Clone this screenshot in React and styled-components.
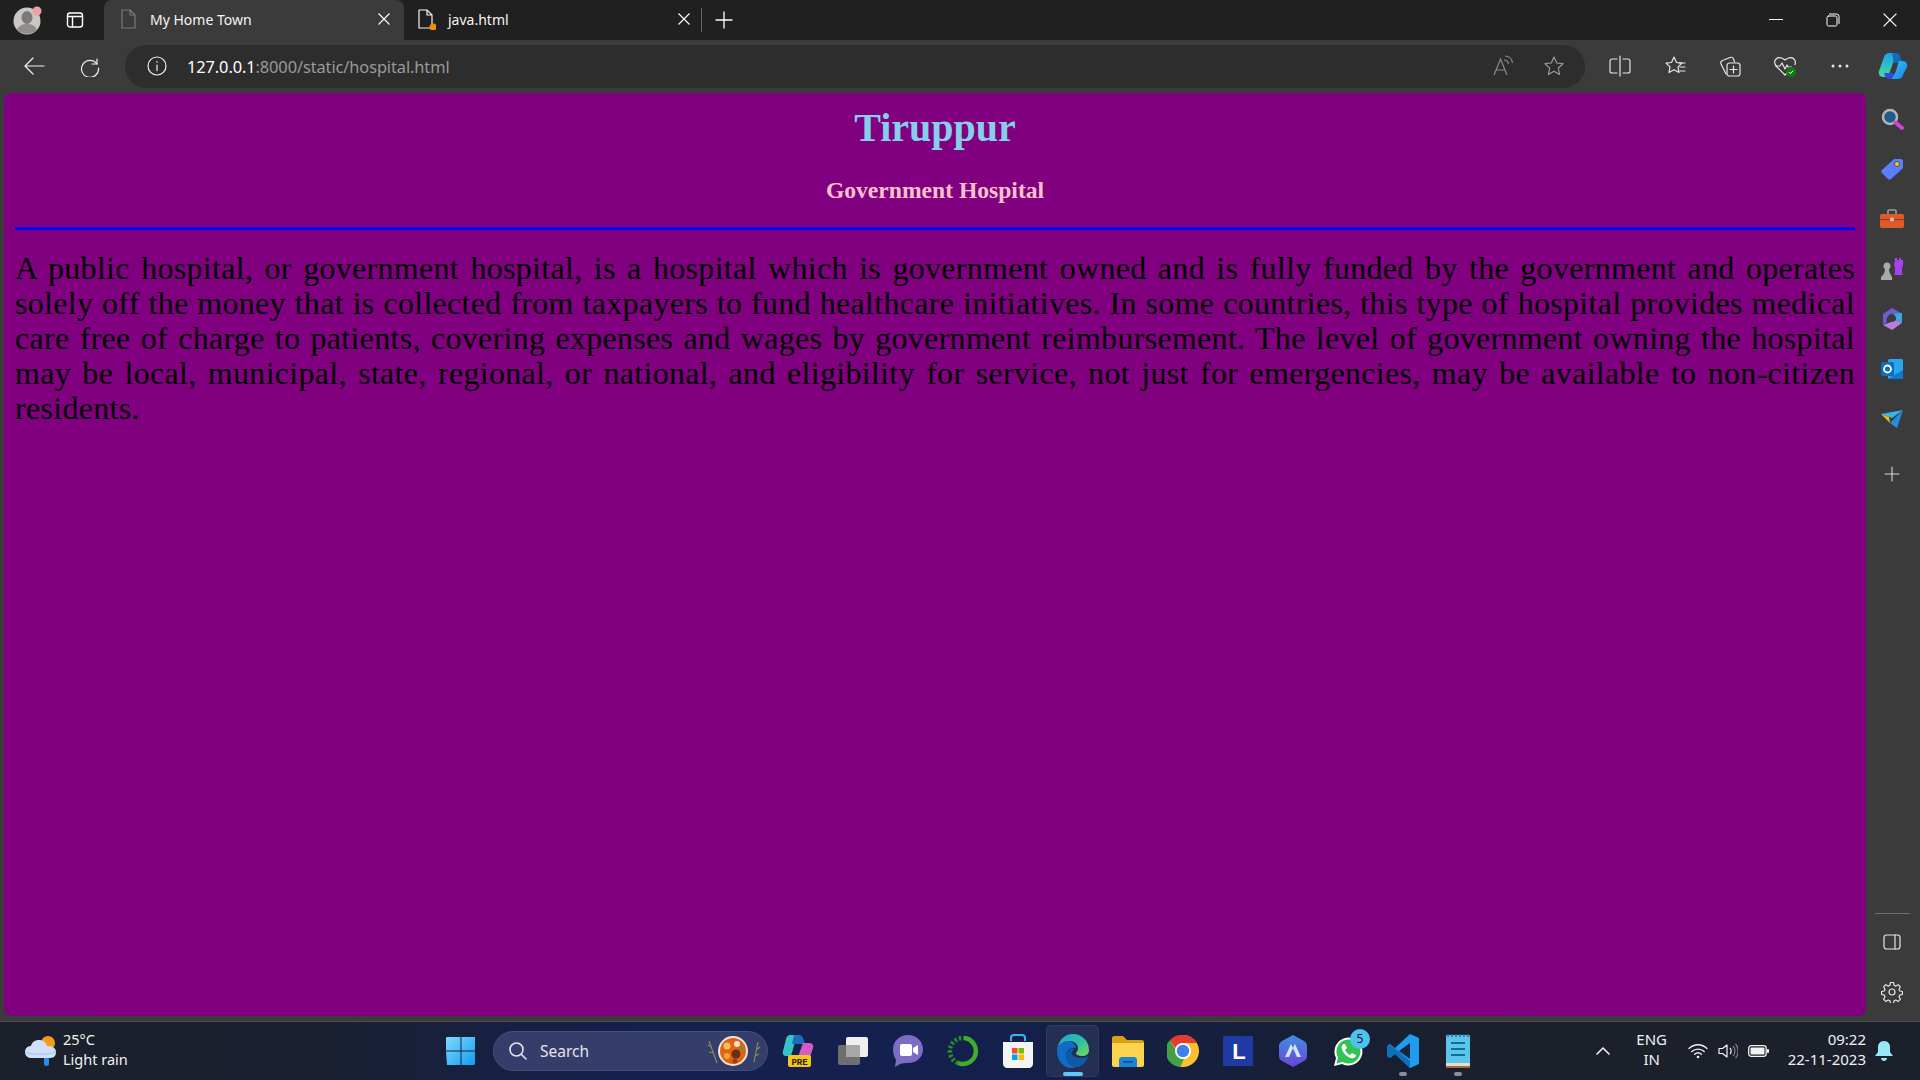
import React from 'react';
import styled, { createGlobalStyle } from 'styled-components';

const GlobalStyle = createGlobalStyle`
  html, body { margin: 0; padding: 0; background: #3b3b3b; }
  body { font-family: "Noto Sans", "Open Sans", sans-serif; overflow: hidden; }
`;

const Screen = styled.div`
  width: 1920px;
  height: 1080px;
  display: flex;
  flex-direction: column;
  overflow: hidden;
`;

/* ---------- tab strip ---------- */
const TabStrip = styled.div`
  height: 40px;
  flex: none;
  display: flex;
  align-items: center;
  background: #202020;
  color: #fff;
`;
const StripButton = styled.div`
  width: ${p => p.$w}px;
  height: 40px;
  flex: none;
  box-sizing: border-box;
  padding-right: ${p => p.$pr || 0}px;
  display: flex;
  align-items: center;
  justify-content: center;
`;
const Tab = styled.div`
  width: ${p => p.$w}px;
  height: 40px;
  flex: none;
  box-sizing: border-box;
  display: flex;
  align-items: center;
  padding: 0 ${p => p.$active ? 14 : 9}px 2px ${p => p.$active ? 15 : 12}px;
  background: ${p => p.$active ? '#3b3b3b' : 'transparent'};
  border-radius: 8px 8px 0 0;
`;
const TabTitle = styled.span`
  flex: 1;
  margin-left: ${p => p.$active ? 11 : 12}px;
  font-size: 14px;
  color: #f4f4f4;
  white-space: nowrap;
`;
const TabDivider = styled.div`
  width: 1px;
  height: 24px;
  margin: 0 2px;
  background: #6a6a6a;
  flex: none;
`;
const WindowControls = styled.div`
  margin-left: auto;
  padding-right: 2px;
  display: flex;
`;
const WindowButton = styled.div`
  width: 57px;
  height: 40px;
  display: flex;
  align-items: center;
  justify-content: center;
`;

/* ---------- toolbar ---------- */
const Toolbar = styled.div`
  height: 48px;
  flex: none;
  display: flex;
  align-items: center;
  background: #3b3b3b;
  padding-top: 4px;
  box-sizing: border-box;
`;
const ToolButton = styled.div`
  width: ${p => p.$w || 55}px;
  height: 40px;
  flex: none;
  display: flex;
  align-items: center;
  justify-content: center;
`;
const AddressBar = styled.div`
  width: 1460px;
  height: 43px;
  margin: 0 7px 0 13px;
  flex: none;
  box-sizing: border-box;
  display: flex;
  align-items: center;
  padding: 0 6px 0 22px;
  background: #2d2d2d;
  border-radius: 22px;
`;
const Url = styled.div`
  margin-left: 20px;
  flex: 1;
  font-size: 16.4px;
  letter-spacing: -0.1px;
  color: #9a9a9a;
`;
const UrlHost = styled.span`
  color: #fff;
`;

/* ---------- page ---------- */
const Middle = styled.div`
  flex: 1;
  display: flex;
  min-height: 0;
  background: #3b3b3b;
`;
const Page = styled.main`
  flex: 1;
  margin: 5px 0 5px 4px;
  padding: 0 11px;
  background: #800080;
  border-radius: 8px;
  font-family: "Liberation Serif", "Times New Roman", serif;
  color: #000;
  overflow: hidden;
`;
const Town = styled.h1`
  margin: 0;
  padding-top: 12px;
  font-size: 40px;
  line-height: 46px;
  text-align: center;
  color: skyblue;
`;
const Subtitle = styled.h2`
  margin: 26px 0 0;
  font-size: 23.6px;
  line-height: 27px;
  text-align: center;
  color: pink;
`;
const Rule = styled.div`
  height: 3px;
  margin-top: 23px;
  background: #0000ff;
`;
const Body = styled.p`
  margin: 21px 0 0;
  font-size: 32px;
  line-height: 35px;
  letter-spacing: 0.3px;
`;
const BodyLine = styled.span`
  display: block;
  white-space: nowrap;
  text-align: justify;
  text-align-last: ${p => p.$last ? 'left' : 'justify'};
`;

/* ---------- edge sidebar ---------- */
const Sidebar = styled.aside`
  width: 54px;
  flex: none;
  box-sizing: border-box;
  display: flex;
  flex-direction: column;
  align-items: center;
  padding: 6px 2px 0 0;
`;
const SideSlot = styled.div`
  width: 100%;
  height: 50px;
  flex: none;
  display: flex;
  align-items: center;
  justify-content: center;
`;
const SideAdd = styled(SideSlot)`
  margin-top: 5px;
`;
const SideFooter = styled.div`
  margin-top: auto;
  width: 100%;
  display: flex;
  flex-direction: column;
  align-items: center;
  padding-bottom: 4px;
`;
const SideLine = styled.div`
  width: 35px;
  height: 1px;
  background: #6f6f6f;
  margin-bottom: 3px;
`;

/* ---------- taskbar ---------- */
const Taskbar = styled.footer`
  height: 59px;
  flex: none;
  box-sizing: border-box;
  border-top: 1px solid #4a4d55;
  display: flex;
  align-items: center;
  color: #fff;
  background: linear-gradient(90deg, #1b202b 0%, #1a2030 16%, #14204f 34%, #14204c 52%, #171f36 68%, #1b202b 80%, #1b202b 100%);
`;
const Weather = styled.div`
  width: 435px;
  flex: none;
  box-sizing: border-box;
  display: flex;
  align-items: center;
  padding-left: 24px;
`;
const WeatherText = styled.div`
  margin: -4px 0 0 5px;
  font-size: 14.5px;
  line-height: 20px;
  color: #f2f2f2;
`;
const StartButton = styled.div`
  width: 52px;
  margin-right: 6px;
  flex: none;
  display: flex;
  justify-content: center;
`;
const SearchBox = styled.div`
  width: 275px;
  height: 40px;
  flex: none;
  box-sizing: border-box;
  display: flex;
  align-items: center;
  padding: 0 5px 0 14px;
  background: #353d6b;
  border: 1px solid #464e79;
  border-radius: 20px;
`;
const SearchLabel = styled.span`
  flex: 1;
  margin-left: 12px;
  font-size: 15.5px;
  color: #e4e4ea;
`;
const Apps = styled.div`
  display: flex;
  margin-left: 2px;
`;
const AppSlot = styled.div`
  width: ${p => p.$active ? 53 : 55}px;
  height: 52px;
  margin: 0 ${p => p.$active ? 1 : 0}px;
  flex: none;
  position: relative;
  display: flex;
  align-items: center;
  justify-content: center;
  box-sizing: border-box;
  background: ${p => p.$active ? 'rgba(255,255,255,.07)' : 'transparent'};
  border: 1px solid ${p => p.$active ? 'rgba(255,255,255,.05)' : 'transparent'};
  border-radius: 5px;
`;
const RunDot = styled.span`
  position: absolute;
  left: 50%;
  bottom: 0;
  transform: translateX(-50%);
  width: ${p => p.$active ? 20 : 8}px;
  height: 4px;
  border-radius: 2px;
  background: ${p => p.$active ? '#5fc8fa' : '#8b8e96'};
`;
const Badge = styled.span`
  position: absolute;
  right: 4px;
  top: 3px;
  width: 20px;
  height: 20px;
  border-radius: 50%;
  background: #4cc2f1;
  color: #10151f;
  font-size: 12px;
  line-height: 20px;
  text-align: center;
`;
const Tray = styled.div`
  margin-left: auto;
  display: flex;
  align-items: center;
  padding-right: 27px;
`;
const Lang = styled.div`
  width: 50px;
  margin: -4px 11px 0 16px;
  font-size: 15px;
  line-height: 20px;
  text-align: center;
  color: #f0f0f0;
`;
const TrayIcons = styled.div`
  display: flex;
  align-items: center;
  gap: 10px;
`;
const Clock = styled.div`
  margin: -4px 0 0 19px;
  font-size: 15px;
  line-height: 20px;
  text-align: right;
  color: #f2f2f2;
`;
const Bell = styled.div`
  margin-left: 9px;
  display: flex;
`;

/* ---------- icons ---------- */
const Line = ({ size = 20, view = 20, color = '#e6e6e6', width = 1.2, children }) => (
  <svg width={size} height={size} viewBox={`0 0 ${view} ${view}`} fill="none" stroke={color} strokeWidth={width} strokeLinecap="round" strokeLinejoin="round">{children}</svg>
);

const Avatar = () => (
  <svg width="30" height="30" viewBox="0 0 30 30">
    <circle cx="14" cy="16" r="13.5" fill="#c9c8c5" />
    <ellipse cx="14" cy="12.5" rx="5.5" ry="6.5" fill="#7b7a77" />
    <path d="M4 25c2-5 6-6 10-6s8 1 10 6c-5 5-15 5-20 0z" fill="#8f8e8a" />
    <circle cx="24" cy="6" r="4.5" fill="#f0a0a5" />
  </svg>
);
const SidebarToggle = () => (
  <Line size={18} view={18} color="#fff" width={1.4}>
    <rect x="1.5" y="2" width="15" height="14" rx="2.5" />
    <path d="M1.5 5.5h15M6.5 5.5V16" />
  </Line>
);
const DocIcon = ({ color, dot }) => (
  <svg width="20" height="22" viewBox="0 0 20 22" fill="none" stroke={color} strokeWidth="1.2" strokeLinejoin="round">
    <path d="M3 2h8l5 5v13H3z" />
    <path d="M11 2v5h5" />
    {dot && <circle cx="17" cy="19" r="3.5" fill="#f98b00" stroke="none" />}
  </svg>
);
const CloseIcon = ({ size = 12, color = '#fff' }) => (
  <svg width={size} height={size} viewBox="0 0 12 12" stroke={color} strokeWidth="1.1"><path d="M.5.5l11 11M11.5.5l-11 11" /></svg>
);
const CopilotIcon = () => (
  <svg width="30" height="28" viewBox="0 0 30 28">
    <defs>
      <linearGradient id="cpA" x1="0" y1="0" x2="0" y2="1"><stop offset="0" stopColor="#1aa3e8" /><stop offset="1" stopColor="#48d8a0" /></linearGradient>
      <linearGradient id="cpB" x1="0" y1="0" x2="1" y2="1"><stop offset="0" stopColor="#2fc3f5" /><stop offset="1" stopColor="#1c7fe8" /></linearGradient>
    </defs>
    <path d="M11 1h8l-4 10-5 14H5c-3 0-5-3-4-6L6 5c1-3 3-4 5-4z" fill="url(#cpA)" />
    <path d="M14 1h4c2 0 3 1 4 3l2 7H16z" fill="#0f6cbd" />
    <path d="M19 27h-8c-2 0-3-1-4-3l-1-3h9z" fill="#2b4fd8" />
    <path d="M21 9h4c3 0 5 3 4 6l-4 8c-1 3-3 4-5 4h-6l4-8z" fill="url(#cpB)" />
  </svg>
);

const WeatherIcon = () => (
  <svg width="34" height="32" viewBox="0 0 34 32">
    <circle cx="24" cy="8" r="7" fill="#f59b1c" />
    <rect x="20" y="20" width="5" height="11" rx="2.5" fill="#2a8cf0" />
    <path d="M8 23c-4 0-7-2-7-6s3-6 6-6c1-4 4-6 8-6s7 2 8 6c4 0 9 1 9 6s-3 6-7 6z" fill="#cfe0f7" />
    <path d="M2 17c4 3 24 3 30 0" fill="none" stroke="#a9c3ee" strokeWidth="1.2" />
  </svg>
);
const StartIcon = () => (
  <svg width="30" height="30" viewBox="0 0 30 30">
    <defs><linearGradient id="st" x1="0" y1="0" x2="1" y2="1"><stop offset="0" stopColor="#7fdcfb" /><stop offset="1" stopColor="#0f9cf0" /></linearGradient></defs>
    <path d="M1 1h13.5v13.5H0V2zM15.5 1H29v13.5H15.5zM0 15.5h14.5V29H1zM15.5 15.5H29V28l-1 1H15.5z" fill="url(#st)" />
  </svg>
);
const BowlIcon = () => (
  <svg width="56" height="32" viewBox="0 0 56 32">
    <path d="M3 6l8 22M6 12l-4-2M8 18l-5-1M48 27l4-20M50 15l4-3M49 21l4-2" stroke="#87895c" strokeWidth="1.2" fill="none" />
    <circle cx="27" cy="16" r="15" fill="#f3e4d6" />
    <circle cx="27" cy="16" r="13" fill="#dd6417" />
    <circle cx="21" cy="11" r="3.5" fill="#f4c052" />
    <circle cx="30" cy="19" r="4.5" fill="#6e2c14" />
    <circle cx="31" cy="9" r="3" fill="#f1dfc9" />
    <circle cx="21" cy="21" r="3" fill="#f4a52b" />
    <circle cx="36" cy="14" r="2" fill="#5d9e33" />
    <circle cx="29" cy="26" r="2.5" fill="#a33b12" />
  </svg>
);

const PreviewApp = () => (
  <svg width="32" height="34" viewBox="0 0 32 34">
    <path d="M8 1h7L9 22H4c-2 0-4-2-3-5L4 5c1-3 2-4 4-4z" fill="#36c2c9" />
    <path d="M12 1h5c2 0 3 1 4 3l2 6H10z" fill="#1b6fbd" />
    <path d="M21 9h6c3 0 5 2 4 5l-3 9H16z" fill="#d45cc7" />
    <rect x="6" y="21" width="23" height="12" rx="2" fill="#f5c518" />
    <text x="17.5" y="30.5" textAnchor="middle" fontFamily="Liberation Mono, monospace" fontWeight="700" fontSize="9" fill="#222">PRE</text>
  </svg>
);
const TaskViewApp = () => (
  <svg width="32" height="30" viewBox="0 0 32 30">
    <rect x="1" y="9" width="22" height="20" rx="2" fill="#6f6f6f" />
    <rect x="9" y="1" width="22" height="20" rx="2" fill="#efefef" />
    <rect x="9" y="9" width="14" height="12" fill="#a8a8a8" />
  </svg>
);
const MeetApp = () => (
  <svg width="30" height="32" viewBox="0 0 30 32">
    <path d="M15 0c8 0 15 6 15 14s-6 14-15 14c-3 0-5 0-8 1l-5 3 1-7C1 22 0 18 0 14 0 6 7 0 15 0z" fill="#7d6cc4" />
    <rect x="7" y="9" width="12" height="12" rx="2" fill="#fff" />
    <path d="M20 13l5-3v10l-5-3z" fill="#fff" />
  </svg>
);
const RingApp = () => (
  <svg width="32" height="32" viewBox="0 0 32 32" fill="none">
    <path d="M17 3a13 13 0 1 1-6 25" stroke="#3fae2a" strokeWidth="4.5" />
    <path d="M11 28A13 13 0 0 1 17 3" stroke="#2c8a2a" strokeWidth="4.5" strokeDasharray="2.5 2" />
  </svg>
);
const StoreApp = () => (
  <svg width="30" height="34" viewBox="0 0 30 34">
    <path d="M8 7V4c0-2 1-3 3-3h8c2 0 3 1 3 3v3" fill="none" stroke="#35b8ee" strokeWidth="2" />
    <path d="M0 8h30v22c0 2-2 4-4 4H4c-2 0-4-2-4-4z" fill="#f4f4f4" />
    <rect x="9" y="14" width="5.5" height="5.5" fill="#f25022" />
    <rect x="15.5" y="14" width="5.5" height="5.5" fill="#7fba00" />
    <rect x="9" y="20.5" width="5.5" height="5.5" fill="#00a4ef" />
    <rect x="15.5" y="20.5" width="5.5" height="5.5" fill="#ffb900" />
  </svg>
);
const EdgeApp = () => (
  <svg width="32" height="34" viewBox="0 0 32 34">
    <defs><linearGradient id="edg" x1="0" y1="0" x2="1" y2="1"><stop offset="0" stopColor="#1ba5d8" /><stop offset=".6" stopColor="#35c29a" /><stop offset="1" stopColor="#7fdc55" /></linearGradient></defs>
    <path d="M16 0c9 0 16 7 16 16 0 4-3 6-7 6-3 0-6-1-6-3 0-1 2-2 2-5 0-4-4-7-8-7-7 0-13 6-13 10C1 7 7 0 16 0z" fill="url(#edg)" />
    <path d="M0 17c0-6 6-10 11-10 4 0 8 3 8 7-5-1-10 2-10 8 0 5 4 10 10 11-2 1-3 1-5 1C6 34 0 26 0 17z" fill="#0f6cc4" />
    <path d="M9 22c0-4 3-7 8-8 0 2-2 3-2 5 0 3 4 5 9 5 3 0 5-1 7-2-2 7-7 12-13 11-5-1-9-6-9-11z" fill="#1058a8" />
  </svg>
);
const FolderApp = () => (
  <svg width="32" height="32" viewBox="0 0 32 32">
    <path d="M0 3c0-1 1-2 2-2h9l4 4h15c1 0 2 1 2 2v4H0z" fill="#d9a013" />
    <path d="M0 8h32v22c0 1-1 2-2 2H2c-1 0-2-1-2-2z" fill="#fbd34e" />
    <path d="M7 32v-7c0-2 1-3 3-3h12c2 0 3 1 3 3v7z" fill="#1b84d4" />
    <rect x="11" y="26" width="10" height="1.6" fill="#0b4f8a" />
  </svg>
);
const ChromeApp = () => (
  <svg width="32" height="32" viewBox="0 0 32 32">
    <circle cx="16" cy="16" r="16" fill="#fbc02d" />
    <path d="M16 0a16 16 0 0 1 14 8H16a8 8 0 0 0-7.5 5L3 5a16 16 0 0 1 13-5z" fill="#e53935" />
    <path d="M3 5l7 12a7 7 0 0 0 7 7l-4 8A16 16 0 0 1 3 5z" fill="#43a047" />
    <circle cx="16" cy="16" r="8" fill="#fff" />
    <circle cx="16" cy="16" r="6.2" fill="#3f80e8" />
  </svg>
);
const LetterApp = () => (
  <svg width="30" height="30" viewBox="0 0 30 30">
    <rect width="30" height="30" fill="#1f3aa5" />
    <text x="16" y="23" textAnchor="middle" fontFamily="Liberation Sans, sans-serif" fontWeight="700" fontSize="22" fill="#fff">L</text>
  </svg>
);
const ShieldApp = () => (
  <svg width="28" height="32" viewBox="0 0 28 32">
    <defs><linearGradient id="shd" x1="0" y1="0" x2="0" y2="1"><stop offset="0" stopColor="#3f8fe0" /><stop offset="1" stopColor="#6a45d8" /></linearGradient></defs>
    <path d="M14 0l11 6c2 1 3 3 3 5v10c0 2-1 4-3 5l-11 6-11-6c-2-1-3-3-3-5V11c0-2 1-4 3-5z" fill="url(#shd)" />
    <path d="M6 22l6-13 2 4-4 9zM22 22l-6-13-2 4 4 9z" fill="#d8e6ff" />
  </svg>
);
const WhatsApp = () => (
  <svg width="30" height="32" viewBox="0 0 30 32">
    <path d="M1 31l2-8A14 14 0 1 1 9 29z" fill="#fff" />
    <path d="M3.5 28.5l1.5-6A12 12 0 1 1 9.5 27z" fill="#33c254" />
    <path d="M11 9c-1 0-3 2-2 5 1 4 5 8 9 9 3 1 5-1 5-3l-4-2-2 2c-2-1-4-3-5-5l2-2-2-4z" fill="#fff" />
  </svg>
);
const VsCodeApp = () => (
  <svg width="32" height="34" viewBox="0 0 32 34">
    <path d="M23 0l9 4v26l-9 4-15-14L3 24l-3-2v-10l3-2 5 4z" fill="#1f9cf0" />
    <path d="M23 9L12 17l11 8z" fill="#16243f" />
    <path d="M0 12l3-2 20 17v7l-15-14-5 4-3-2z" fill="#0e6fb8" />
  </svg>
);
const NotepadApp = () => (
  <svg width="24" height="34" viewBox="0 0 24 34">
    <rect y="1" width="24" height="33" rx="1" fill="#5cc5ea" />
    <rect y="29" width="24" height="3" fill="#e6dcc8" />
    <rect y="32" width="24" height="2" fill="#a86a3a" />
    <path d="M2 0v3M6 0v3M10 0v3M14 0v3M18 0v3M22 0v3" stroke="#2c6d8c" strokeWidth="1.4" />
    <path d="M5 9h14M5 15h14M5 21h14" stroke="#0f6f95" strokeWidth="2.2" />
  </svg>
);

const sideIcons = [
  <svg key="s" width="24" height="24" viewBox="0 0 24 24"><circle cx="10" cy="10" r="7" fill="#1f5a88" stroke="#b4b4b4" strokeWidth="2.5" /><path d="M15.5 15.5L22 21" stroke="#d63fd0" strokeWidth="4" strokeLinecap="round" /></svg>,
  <svg key="t" width="22" height="22" viewBox="0 0 22 22"><path d="M13 1h7c1 0 2 1 2 2v7L10 21c-1 1-2 1-3 0L1 15c-1-1-1-2 0-3z" fill="#5b7dff" /><circle cx="16" cy="6" r="2.5" fill="#f3c31c" stroke="#333" strokeWidth=".7" /></svg>,
  <svg key="b" width="24" height="20" viewBox="0 0 24 20"><path d="M8 5V2c0-1 1-1 1-1h6s1 0 1 1v3" fill="none" stroke="#9b9b9b" strokeWidth="1.6" /><rect y="5" width="24" height="14" rx="2" fill="#dd5a2a" /><rect y="10" width="24" height="1.2" fill="#a53c18" /><circle cx="12" cy="10.5" r="2" fill="#c9c9c9" /></svg>,
  <svg key="c" width="24" height="24" viewBox="0 0 24 24"><path d="M15 1h2v2h2V1h2v2h2V1v8l-1 1v6l1 2H14l1-2v-6l-1-1z" fill="#a83ff0" /><circle cx="7" cy="9" r="3.5" fill="#a9a9a9" /><path d="M5 12h4c0 4 2 6 3 8v3H1v-3c2-2 4-4 4-8z" fill="#a9a9a9" /></svg>,
  <svg key="m" width="22" height="22" viewBox="0 0 22 22"><path d="M11 0l9 5v4l-7-3a6 6 0 0 0-7 8L2 17V6z" fill="#6a5fd0" /><path d="M12 6l9-1v10l-6-3a6 6 0 0 0-3-6z" fill="#35a8e6" /><path d="M15 12l6 3-10 7-9-5 8-3a6 6 0 0 0 5-2z" fill="#b57ee0" /></svg>,
  <svg key="o" width="22" height="22" viewBox="0 0 22 22"><rect x="7" y="1" width="15" height="20" rx="1.5" fill="#28a8ea" /><path d="M7 21l15-9v8c0 1-1 1-1 1z" fill="#0f78d4" /><rect y="4" width="13" height="14" rx="1.5" fill="#0f6cbd" /><circle cx="6.5" cy="11" r="3.5" fill="none" stroke="#fff" strokeWidth="1.8" /></svg>,
  <svg key="p" width="22" height="18" viewBox="0 0 22 18"><path d="M0 4l22-4-11 8z" fill="#36b4ec" /><path d="M0 4l8 3 1 6z" fill="#f5b91e" /><path d="M22 0L9 13l7 5z" fill="#1f8fe0" /></svg>,
];

const bodyLines = [
  'A public hospital, or government hospital, is a hospital which is government owned and is fully funded by the government and operates',
  'solely off the money that is collected from taxpayers to fund healthcare initiatives. In some countries, this type of hospital provides medical',
  'care free of charge to patients, covering expenses and wages by government reimbursement. The level of government owning the hospital',
  'may be local, municipal, state, regional, or national, and eligibility for service, not just for emergencies, may be available to non-citizen',
  'residents.',
];

export default function App() {
  return (
    <Screen>
      <GlobalStyle />
      <TabStrip>
        <StripButton $w={56}><Avatar /></StripButton>
        <StripButton $w={48} $pr={10}><SidebarToggle /></StripButton>
        <Tab $w={300} $active>
          <DocIcon color="#7a7a7a" />
          <TabTitle $active>My Home Town</TabTitle>
          <CloseIcon />
        </Tab>
        <Tab $w={295}>
          <DocIcon color="#f2f2f2" dot />
          <TabTitle>java.html</TabTitle>
          <CloseIcon />
        </Tab>
        <TabDivider />
        <StripButton $w={40}>
          <Line size={18} view={18} color="#fff" width={1.3}><path d="M9 1v16M1 9h16" /></Line>
        </StripButton>
        <WindowControls>
          <WindowButton><svg width="14" height="2"><rect width="14" height="1" fill="#fff" /></svg></WindowButton>
          <WindowButton>
            <Line size={14} view={14} color="#fff" width={1}><rect x="1" y="3" width="10" height="10" rx="1.5" /><path d="M3.5 1h7a2.5 2.5 0 0 1 2.5 2.5v7" /></Line>
          </WindowButton>
          <WindowButton><CloseIcon size={14} /></WindowButton>
        </WindowControls>
      </TabStrip>

      <Toolbar>
        <ToolButton $w={68}>
          <Line size={22} view={22} color="#f0f0f0"><path d="M21 11H2M10 3l-8 8 8 8" /></Line>
        </ToolButton>
        <ToolButton $w={44}>
          <Line size={22} view={22} color="#f0f0f0"><path d="M18 4v5h-5" /><path d="M18 9a8.5 8.5 0 1 0 1.5 4" /></Line>
        </ToolButton>
        <AddressBar>
          <Line size={20} view={20} color="#f0f0f0"><circle cx="10" cy="10" r="9" /><path d="M10 9v5.5M10 5.6v.6" /></Line>
          <Url><UrlHost>127.0.0.1</UrlHost>:8000/static/hospital.html</Url>
          <ToolButton $w={51}>
            <svg width="22" height="22" viewBox="0 0 22 22" fill="none" stroke="#8a8a8a" strokeWidth="1.2"><path d="M2 20L8.5 4 15 20M4.5 15h8" /><path d="M12 5c2 0 4 1.5 4.5 4M13 1c4 0 7 3 7.5 7" /></svg>
          </ToolButton>
          <ToolButton $w={51}>
            <Line size={22} view={22} color="#9a9a9a"><path d="M11 2l2.700 6 6.300.7-4.700 4.300 1.300 6.500-5.600-3.300-5.600 3.300 1.300-6.500L2 8.700 8.300 8z" /></Line>
          </ToolButton>
        </AddressBar>
        <ToolButton>
          <Line size={22} view={22}><path d="M11 1v20M8 4H3a2 2 0 0 0-2 2v10a2 2 0 0 0 2 2h5M14 4h5a2 2 0 0 1 2 2v10a2 2 0 0 1-2 2h-5" /></Line>
        </ToolButton>
        <ToolButton>
          <Line size={22} view={22}><path d="M10 2l2.500 5.500 5.500.6-4 3.800 1 5.600-5-2.800-5 2.800 1-5.600-4-3.800 5.500-.6z" /><path d="M15 8h6M16 12h5M16 16h5" /></Line>
        </ToolButton>
        <ToolButton>
          <Line size={22} view={22}><path d="M7 19L2 9c-.5-1.500 0-3 1.500-3.500L11 2.500c1.500-.5 3 0 3.500 1.500l1 3" /><rect x="8" y="8" width="13" height="13" rx="2.500" /><path d="M14.500 11v7M11 14.500h7" /></Line>
        </ToolButton>
        <ToolButton>
          <svg width="24" height="24" viewBox="0 0 24 24" fill="none" stroke="#e6e6e6" strokeWidth="1.2" strokeLinejoin="round">
            <path d="M14 19l-2 2-8-8C2 11 1 9 2 6.500 3.500 3 8 2.500 12 6c4-3.500 8.500-3 10 .5.500 1.500.4 3-.2 4.500" />
            <path d="M2 12h5l2-3 3 6 2-4 1 2h4" />
            <circle cx="18" cy="18" r="5" fill="#107c10" stroke="none" />
            <path d="M15.800 18l1.600 1.600 2.800-3" stroke="#fff" strokeWidth="1" />
          </svg>
        </ToolButton>
        <ToolButton>
          <svg width="18" height="4" viewBox="0 0 18 4" fill="#e6e6e6"><circle cx="2" cy="2" r="1.5" /><circle cx="9" cy="2" r="1.5" /><circle cx="16" cy="2" r="1.5" /></svg>
        </ToolButton>
        <ToolButton $w={51}><CopilotIcon /></ToolButton>
      </Toolbar>

      <Middle>
        <Page>
          <Town>Tiruppur</Town>
          <Subtitle>Government Hospital</Subtitle>
          <Rule />
          <Body>
            {bodyLines.map((line, i) => (
              <BodyLine key={i} $last={i === bodyLines.length - 1}>{line}</BodyLine>
            ))}
          </Body>
        </Page>
        <Sidebar>
          {sideIcons.map((icon, i) => <SideSlot key={i}>{icon}</SideSlot>)}
          <SideAdd>
            <Line size={16} view={16} color="#d6d6d6" width={1.1}><path d="M8 1v14M1 8h14" /></Line>
          </SideAdd>
          <SideFooter>
            <SideLine />
            <SideSlot>
              <Line size={18} view={18} color="#e6e6e6"><rect x="1" y="2" width="16" height="14" rx="2.5" /><path d="M12 2v14" /></Line>
            </SideSlot>
            <SideSlot>
              <Line size={22} view={22} color="#e6e6e6"><circle cx="11" cy="11" r="3" /><path d="M9.500 1.500h3l.6 2.800 1.700.8 2.500-1.400 2.100 2.100-1.400 2.500.7 1.700 2.800.5v3l-2.800.6-.7 1.700 1.400 2.500-2.100 2.100-2.500-1.400-1.700.7-.6 2.800h-3l-.6-2.800-1.700-.7-2.500 1.400-2.100-2.100 1.400-2.500-.7-1.700-2.800-.6v-3l2.800-.5.7-1.700-1.400-2.500 2.100-2.100 2.500 1.400 1.700-.8z" /></Line>
            </SideSlot>
          </SideFooter>
        </Sidebar>
      </Middle>

      <Taskbar>
        <Weather>
          <WeatherIcon />
          <WeatherText>25°C<br />Light rain</WeatherText>
        </Weather>
        <StartButton><StartIcon /></StartButton>
        <SearchBox>
          <Line size={20} view={20} color="#e6e6ea" width={1.6}><circle cx="8.500" cy="8.500" r="6.500" /><path d="M13.500 13.500L18 18" /></Line>
          <SearchLabel>Search</SearchLabel>
          <BowlIcon />
        </SearchBox>
        <Apps>
          <AppSlot><PreviewApp /></AppSlot>
          <AppSlot><TaskViewApp /></AppSlot>
          <AppSlot><MeetApp /></AppSlot>
          <AppSlot><RingApp /></AppSlot>
          <AppSlot><StoreApp /></AppSlot>
          <AppSlot $active><EdgeApp /><RunDot $active /></AppSlot>
          <AppSlot><FolderApp /></AppSlot>
          <AppSlot><ChromeApp /></AppSlot>
          <AppSlot><LetterApp /></AppSlot>
          <AppSlot><ShieldApp /></AppSlot>
          <AppSlot><WhatsApp /><Badge>5</Badge></AppSlot>
          <AppSlot><VsCodeApp /><RunDot /></AppSlot>
          <AppSlot><NotepadApp /><RunDot /></AppSlot>
        </Apps>
        <Tray>
          <Line size={16} view={16} color="#f2f2f2" width={1.6}><path d="M2 11l6-6 6 6" /></Line>
          <Lang>ENG<br />IN</Lang>
          <TrayIcons>
            <svg width="20" height="16" viewBox="0 0 20 16" fill="none" stroke="#f2f2f2" strokeWidth="1.3" strokeLinecap="round"><path d="M1 5.500c5-5 13-5 18 0M3.800 8.500c3.500-3.300 9-3.300 12.400 0M6.600 11.300c2-1.800 4.800-1.800 6.800 0" /><circle cx="10" cy="14" r="1.3" fill="#f2f2f2" stroke="none" /></svg>
            <svg width="20" height="18" viewBox="0 0 20 18" fill="none" stroke="#f2f2f2" strokeWidth="1.2" strokeLinejoin="round"><path d="M1 6.500h3.500L9 3v12l-4.500-3.500H1z" /><path d="M12 6c1.500 1.500 1.500 4.500 0 6" /><path d="M15 4c2.500 2.500 2.500 7.500 0 10M17.500 2c3.500 3.500 3.500 10.500 0 14" stroke="#7f7f7f" /></svg>
            <svg width="21" height="12" viewBox="0 0 21 12" fill="none"><rect x=".7" y=".7" width="17.5" height="10.6" rx="2.5" stroke="#f2f2f2" strokeWidth="1.3" /><rect x="2.500" y="2.500" width="14" height="7" rx="1" fill="#f2f2f2" /><rect x="19" y="4" width="2" height="4" rx="1" fill="#f2f2f2" /></svg>
          </TrayIcons>
          <Clock>09:22<br />22-11-2023</Clock>
          <Bell>
            <svg width="18" height="20" viewBox="0 0 18 20" fill="#9be6fb"><path d="M9 0c4 0 6 3 6 6v5l3 4H0l3-4V6c0-3 2-6 6-6z" /><path d="M6 17h6c0 2-1.500 3-3 3s-3-1-3-3z" /></svg>
          </Bell>
        </Tray>
      </Taskbar>
    </Screen>
  );
}
